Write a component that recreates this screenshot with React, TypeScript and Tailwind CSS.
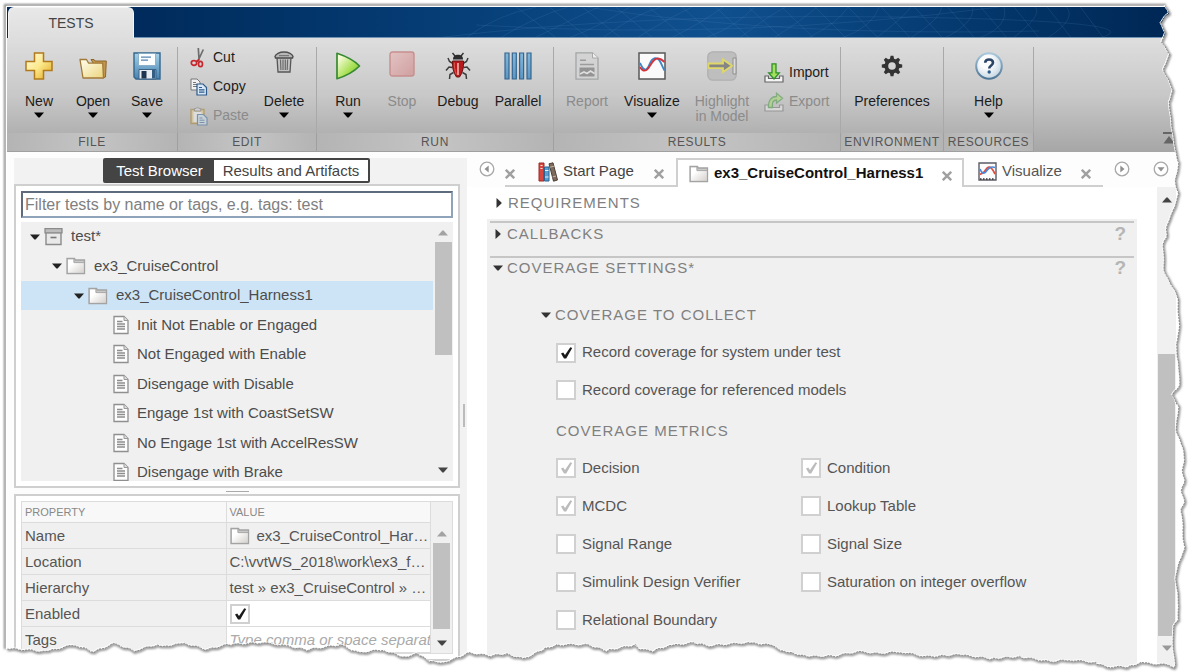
import React, { useState } from "react";
import type { ReactNode } from "react";

/* ---------- small glyphs ---------- */

const Caret = ({ className = "text-black" }: { className?: string }) => (
  <svg width="10" height="6" viewBox="0 0 10 6" className={`shrink-0 ${className}`} aria-hidden="true">
    <path d="M0 .5h10L5.6 5.5H4.4z" fill="currentColor" />
  </svg>
);

const CaretRight = () => (
  <svg width="6" height="10" viewBox="0 0 6 10" className="shrink-0 text-[#333]" aria-hidden="true">
    <path d="M.5 0v10L5.5 5.6V4.4z" fill="currentColor" />
  </svg>
);

const CaretUp = ({ className = "text-[#a3a3a3]" }: { className?: string }) => (
  <svg width="10" height="6" viewBox="0 0 10 6" className={`shrink-0 ${className}`} aria-hidden="true">
    <path d="M0 5.5h10L5.6.5H4.4z" fill="currentColor" />
  </svg>
);

const Cross = () => (
  <svg width="10" height="10" viewBox="0 0 10 10" aria-hidden="true">
    <path d="M.8.8l8.4 8.4M9.2.8L.8 9.2" stroke="#a0a0a0" strokeWidth="2.4" />
  </svg>
);

const FolderIcon = () => (
  <svg width="20" height="18" viewBox="0 0 20 18" className="shrink-0" aria-hidden="true">
    <defs>
      <linearGradient id="fold" x1="0" y1="0" x2="1" y2="1">
        <stop offset="0.3" stopColor="#fff" />
        <stop offset="1" stopColor="#d5d1cd" />
      </linearGradient>
    </defs>
    <path d="M1 16.500V1.500h7.500l1 1.500H18.500v13.500z" fill="#c9c9c9" stroke="#a3a3a3" strokeWidth="1.300" />
    <path d="M2 15.700V2.500h5.500v3.200h10.300v10z" fill="url(#fold)" />
    <path d="M8 1.800v3.800h10" fill="none" stroke="#a3a3a3" strokeWidth=".9" />
  </svg>
);

const BoxIcon = () => (
  <svg width="19" height="19" viewBox="0 0 19 19" className="shrink-0" aria-hidden="true">
    <path d="M2 5.500h15v12H2z" fill="#e9e9e9" stroke="#8b8b8b" strokeWidth="1.400" />
    <path d="M1 1.700h17v4.200H1z" fill="#bdbdbd" stroke="#8b8b8b" strokeWidth="1.300" />
    <path d="M6.500 9.700h6v1.600h-6z" fill="#777" />
  </svg>
);

const DocIcon = () => (
  <svg width="16" height="20" viewBox="0 0 16 20" className="shrink-0" aria-hidden="true">
    <path d="M1 1.500h10L15 5.500v13H1z" fill="#fdfdfd" stroke="#8f8f8f" strokeWidth="1.300" />
    <path d="M11 1.500v4h4" fill="#ddd" stroke="#9a9a9a" />
    <path d="M4 6.500h5.500M4 9h8M4 11.500h8M4 14h8" stroke="#8d8d8d" strokeWidth="1.500" />
  </svg>
);

/* ---------- toolbar icons ---------- */

const PlusIcon = () => (
  <svg width="28" height="28" viewBox="0 0 28 28" aria-hidden="true">
    <defs>
      <linearGradient id="gold" x1="0" y1="0" x2="1" y2="1">
        <stop offset="0" stopColor="#fffbe0" />
        <stop offset="0.5" stopColor="#fbe98c" />
        <stop offset="1" stopColor="#e3a51c" />
      </linearGradient>
    </defs>
    <path d="M9.500 1h9v8.500H27v9h-8.500V27h-9v-8.500H1v-9h8.500z" fill="url(#gold)" stroke="#b07a1d" strokeWidth="1.500" />
  </svg>
);

const OpenIcon = () => (
  <svg width="28" height="28" viewBox="0 0 28 28" aria-hidden="true">
    <defs>
      <linearGradient id="open" x1="0" y1="0" x2="1" y2="1">
        <stop offset="0" stopColor="#fffef0" />
        <stop offset="1" stopColor="#ecd57c" />
      </linearGradient>
    </defs>
    <path d="M12 7.500h3l1 1.500h11.300L26.500 25l-3 1z" fill="#c2964e" stroke="#8d6528" />
    <path d="M1 7.500h6.500l2 3.500 14.200.2L24.500 26H4z" fill="url(#open)" stroke="#a27a38" strokeWidth="1.300" strokeLinejoin="round" />
  </svg>
);

const SaveIcon = () => (
  <svg width="28" height="28" viewBox="0 0 28 28" aria-hidden="true">
    <defs>
      <linearGradient id="disk" x1="0" y1="0" x2="0" y2="1">
        <stop offset="0" stopColor="#a6d3ea" />
        <stop offset="1" stopColor="#4682b0" />
      </linearGradient>
    </defs>
    <path d="M1 1h26v26H3l-2-2z" fill="url(#disk)" stroke="#33668d" strokeWidth="1.400" />
    <path d="M5.500 1.500h17v12h-17z" fill="#fbfdff" stroke="#7fa6c0" strokeWidth=".8" />
    <path d="M8 5.200h10M8 8.200h7" stroke="#5784b4" strokeWidth="1.300" />
    <path d="M6 17.500h17V27H6z" fill="#e7eaee" stroke="#3c6285" />
    <path d="M8.500 19h5v7.500h-5z" fill="#1d3550" />
    <path d="M19 18h3.500v8.500H19z" fill="#325d85" />
  </svg>
);

const CutIcon = () => (
  <svg width="18" height="20" viewBox="0 0 18 20" aria-hidden="true">
    <path d="M8.300 0L9 11M13.300 1.500L7.500 14" stroke="#6d6d6d" strokeWidth="1.700" />
    <ellipse cx="4" cy="15" rx="2.700" ry="2.300" fill="none" stroke="#c8262d" strokeWidth="1.700" />
    <ellipse cx="10.500" cy="16" rx="2" ry="2.700" fill="none" stroke="#c8262d" strokeWidth="1.700" />
    <path d="M6 13.500L9.500 11.500" stroke="#c8262d" strokeWidth="1.500" />
  </svg>
);

const CopyIcon = () => (
  <svg width="18" height="18" viewBox="0 0 18 18" aria-hidden="true">
    <path d="M1 1h6l3 3v8H1z" fill="#f2f2f2" stroke="#777" />
    <path d="M3 4.500h3M3 6.500h5M3 8.500h5" stroke="#777" />
    <path d="M7 6h6l3.500 3.500v7.500H7z" fill="#d6e8f7" stroke="#2e5a89" strokeWidth="1.200" />
    <path d="M9 9.500h3M9 11.800h5.500M9 14.200h5.500" stroke="#2e5a89" strokeWidth="1.200" />
  </svg>
);

const PasteIcon = () => (
  <svg width="18" height="20" viewBox="0 0 18 20" className="opacity-50" aria-hidden="true">
    <path d="M1 3.500h13v14H1z" fill="#e9cf87" stroke="#a9802e" strokeWidth="1.400" />
    <path d="M3.500 6h8v10h-8z" fill="#fff" />
    <path d="M4.500 5V2.500h1.500a1.800 1.800 0 013 0h1.800V5z" fill="#ddd" stroke="#777" />
    <path d="M7.500 8.500h6l3.500 3.500v7H7.500z" fill="#d6e8f7" stroke="#3e6d9c" strokeWidth="1.200" />
    <path d="M9.500 12h3M9.500 14.200h5M9.500 16.500h5" stroke="#3e6d9c" />
  </svg>
);

const TrashIcon = () => (
  <svg width="20" height="22" viewBox="0 0 20 22" aria-hidden="true">
    <path d="M3 6.500h14l-1 14.500H4z" fill="#c4c4c4" stroke="#575757" strokeWidth="1.300" />
    <path d="M6.500 8.500l.4 10.500M9 8.500v10.500M11.300 8.500v10.500M13.600 8.500l-.4 10.500" stroke="#6a6a6a" strokeWidth="1.200" />
    <path d="M1 5.500C1.500 3 5.500 1 10 1s8.500 2 9 4.500l-.5 1.500h-17z" fill="#b7b7b7" stroke="#4f4f4f" strokeWidth="1.400" />
    <path d="M5 4.600h10" stroke="#777" strokeWidth="1.200" />
  </svg>
);

const RunIcon = () => (
  <svg width="26" height="28" viewBox="0 0 26 28" aria-hidden="true">
    <defs>
      <linearGradient id="play" x1="0" y1="0" x2="1" y2="1">
        <stop offset="0.15" stopColor="#f4fbd6" />
        <stop offset="0.6" stopColor="#a9e055" />
        <stop offset="1" stopColor="#66b62c" />
      </linearGradient>
    </defs>
    <path d="M2 1.300c9 3 17 7 22.500 12.700C19 19.500 11 24 2 26.700z" fill="url(#play)" stroke="#378a31" strokeWidth="1.700" strokeLinejoin="round" />
  </svg>
);

const StopIcon = () => (
  <svg width="26" height="26" viewBox="0 0 26 26" aria-hidden="true">
    <defs>
      <linearGradient id="halt" x1="0" y1="0" x2="1" y2="1">
        <stop offset="0" stopColor="#e3c3c3" />
        <stop offset="1" stopColor="#d0a0a0" />
      </linearGradient>
    </defs>
    <rect x="1" y="1" width="24" height="24" rx="2.500" fill="url(#halt)" stroke="#c78f8f" strokeWidth="1.400" />
  </svg>
);

const BugIcon = () => (
  <svg width="26" height="28" viewBox="0 0 26 28" aria-hidden="true">
    <path
      d="M8 11.500L4.500 9.500 3 6M18 11.500l3.500-2L23 6M7.500 15.500L4 15l-3 3.500M18.500 15.500l3.500-.5 3 3.500M8.500 20.500L5 22.500 4.500 27M17.500 20.500l3.500 2 .5 4.500"
      fill="none" stroke="#3c3c3c" strokeWidth="1.500"
    />
    <path d="M10 4L7.500 1M16 4l2.500-3" stroke="#333" strokeWidth="1.400" />
    <path d="M8 7.500C8 4 10 2.700 13 2.700S18 4 18 7.500z" fill="#2c2c2c" />
    <path d="M7.500 9h11c.5 6-1 12-4 16h-3c-3-4-4.500-10-4-16z" fill="#b9191c" stroke="#6a1414" />
    <path d="M13 11v12" stroke="#f0b6b0" strokeWidth="1.600" />
    <path d="M9.300 10.500c0 4 .4 8 2 12" stroke="#dd5a50" fill="none" />
  </svg>
);

const ParallelIcon = () => (
  <svg width="28" height="28" viewBox="0 0 28 28" aria-hidden="true">
    <defs>
      <linearGradient id="bars" x1="0" y1="0" x2="0" y2="1">
        <stop offset="0" stopColor="#83b8dc" />
        <stop offset="1" stopColor="#5b96c4" />
      </linearGradient>
    </defs>
    <path d="M1 1h4v26H1zM8.300 1h4v26h-4zM15.600 1h4v26h-4zM23 1h4v26h-4z" fill="url(#bars)" stroke="#34658f" strokeWidth="1.200" />
  </svg>
);

const ReportIcon = () => (
  <svg width="24" height="28" viewBox="0 0 24 28" aria-hidden="true">
    <path d="M1 .8h16.500L23 6v21.200H1z" fill="#d3d3d3" stroke="#a3a5a6" strokeWidth="1.300" />
    <path d="M17.500.8V6H23" fill="#eee" stroke="#a9a9a9" />
    <path d="M5 8.300h6M5 12.500h14" stroke="#9c9c9c" strokeWidth="1.500" />
    <path d="M4.500 15.500h15v9h-15z" fill="#949494" />
    <path d="M5 22l4-2 3 1.500 3.500-2.500 4 2.500" stroke="#dedede" strokeWidth="1.600" fill="none" />
  </svg>
);

const PlotIcon = () => (
  <svg width="28" height="28" viewBox="0 0 28 28" aria-hidden="true">
    <path d="M1 1h26v26H1z" fill="#fafafa" stroke="#585858" strokeWidth="1.500" />
    <path d="M2 11c2 4 3 7 6 6.500C12 16 11 7 17 6.200c5-.5 6 6 9.500 12.300" fill="none" stroke="#3b86c7" strokeWidth="1.800" />
    <path d="M2 15c2 3.500 4 4.500 6.500 3C13 15 14 6 20 6.500c3 .2 5 2 6.500 3.500" fill="none" stroke="#d4333b" strokeWidth="1.800" />
  </svg>
);

const MiniPlotIcon = () => (
  <svg width="19" height="19" viewBox="0 0 19 19" className="shrink-0" aria-hidden="true">
    <path d="M1 1h17v17H1z" fill="#fcfcfc" stroke="#5b5b66" strokeWidth="1.400" />
    <path d="M2 12.500l4-2.500 3-3.800c3-2.600 5 0 8 5.800" fill="none" stroke="#e04a3a" strokeWidth="1.700" />
    <path d="M2 7c1.500 3.500 3 5 5 3.500C10 8 11 3.500 17 5.500" fill="none" stroke="#4b86d8" strokeWidth="1.700" />
    <path d="M2 17h15" stroke="#333" strokeWidth="1.600" strokeDasharray="1.500 1.500" />
  </svg>
);

const HighlightIcon = () => (
  <svg width="30" height="30" viewBox="0 0 30 30" aria-hidden="true">
    <rect x=".8" y=".8" width="28.400" height="28.400" rx="5" fill="#bebebe" stroke="#b0b0b0" strokeWidth="1.300" />
    <path d="M26 7h3v16h-3z" fill="#dadada" stroke="#8f8f8f" />
    <path d="M1.500 12.500h14.500V8.500l9 6.300-9 6.300v-4H1.500z" fill="#858585" stroke="#dfd868" strokeWidth="1.800" />
  </svg>
);

const TrayIcon = ({ kind }: { kind: "in" | "out" }) => (
  <svg width="20" height="20" viewBox="0 0 20 20" className={kind === "out" ? "opacity-45" : ""} aria-hidden="true">
    <path d="M1 13v6h18v-6h-3.500v2.500h-11V13z" fill="#f4f4f4" stroke="#666" strokeWidth="1.200" />
    {kind === "in" ? (
      <path d="M8 .8h4v9h3.300L10 16 4.700 9.800H8z" fill="#a3e05c" stroke="#2f8f2b" strokeWidth="1.300" />
    ) : (
      <path d="M4.500 15.500C4 9 7 4.500 12.500 4.500V1.200l6 5-6 5V8C9 8 8 10.500 8.500 15.500z" fill="#a3e05c" stroke="#2f8f2b" strokeWidth="1.300" />
    )}
  </svg>
);

const GearIcon = () => (
  <svg width="22" height="22" viewBox="0 0 22 22" aria-hidden="true">
    <g fill="#333">
      {[0, 45, 90, 135, 180, 225, 270, 315].map((a) => (
        <path key={a} d="M8.800 4.500L9.600.8h2.800l.8 3.700z" transform={`rotate(${a} 11 11)`} />
      ))}
    </g>
    <circle cx="11" cy="11" r="5.700" fill="none" stroke="#333" strokeWidth="3.800" />
  </svg>
);

const HelpIcon = () => (
  <svg width="28" height="28" viewBox="0 0 28 28" aria-hidden="true">
    <defs>
      <linearGradient id="orb" x1="0" y1="0" x2="0" y2="1">
        <stop offset="0" stopColor="#a9c8dc" />
        <stop offset="1" stopColor="#4e7596" />
      </linearGradient>
      <radialGradient id="ball" cx=".4" cy=".35" r=".8">
        <stop offset="0.300" stopColor="#fbfcfd" />
        <stop offset="1" stopColor="#b4cad9" />
      </radialGradient>
    </defs>
    <circle cx="14" cy="14" r="12.800" fill="url(#ball)" stroke="url(#orb)" strokeWidth="2" />
    <path d="M10.200 10.800C10.200 8.500 11.800 7.500 14 7.500s4 1.200 4 3.300c0 2.600-3.800 2.700-3.800 5.700" fill="none" stroke="#2c4466" strokeWidth="2.600" />
    <circle cx="14.200" cy="20" r="1.700" fill="#2d5c8a" />
  </svg>
);

const BooksIcon = () => (
  <svg width="20" height="20" viewBox="0 0 20 20" className="shrink-0" aria-hidden="true">
    <path d="M1 1h5v18H1z" fill="#d8473f" stroke="#9b2b27" />
    <path d="M2.500 3.500h2M2.500 6.500h2" stroke="#fbe6e2" />
    <path d="M6.500 5h4.500v14H6.500z" fill="#5a9ed0" stroke="#29618f" />
    <path d="M7 8.500h3.500M7 15h3.500" stroke="#e4f1fa" />
    <path d="M11 1.800l4-1L19.500 18l-4 1.200z" fill="#7c6a5c" stroke="#4d4037" />
    <path d="M12 5.200l4-1M14.500 15l3.500-1" stroke="#c3b19f" />
  </svg>
);

/* ---------- toolbar ---------- */

const ToolGroup = ({ name, className, children }: { name: string; className: string; children: ReactNode }) => (
  <section aria-label={name} className={`flex shrink-0 flex-col ${className}`}>
    <div className="mt-[9px] flex h-[86px] items-start border-r border-[#a9a9a9]">{children}</div>
    <div className="flex h-[19px] items-center justify-center border-r border-b border-[#a0a0a0] bg-linear-to-r from-[#b4b4b4] via-[#c4c4c4] to-[#b4b4b4] text-[12px] tracking-wider text-[#555]">
      {name}
    </div>
  </section>
);

const BigButton = ({
  icon, label, width, menu = false, disabled = false,
}: { icon: ReactNode; label: string; width: string; menu?: boolean; disabled?: boolean }) => (
  <button
    type="button"
    disabled={disabled}
    className={`flex shrink-0 flex-col items-center whitespace-pre text-[14px] leading-[15px] ${width} ${disabled ? "text-[#8b8b8b]" : "text-[#1c1c1c]"}`}
  >
    <span className="mt-1 mb-[13px] flex h-[30px] items-center justify-center">{icon}</span>
    <span>{label}</span>
    {menu && <Caret className="mt-[3px] text-black" />}
  </button>
);

const SmallButton = ({ icon, label, disabled = false }: { icon: ReactNode; label: string; disabled?: boolean }) => (
  <button
    type="button"
    disabled={disabled}
    className={`flex h-[29px] items-center gap-[5px] text-[14px] ${disabled ? "text-[#8b8b8b]" : "text-[#1c1c1c]"}`}
  >
    {icon}
    <span>{label}</span>
  </button>
);

const Toolbar = () => (
  <div className="flex h-[114px] shrink-0 bg-linear-to-b from-[#dedede] via-[#c8c8c8] to-[#a6a6a6]">
    <ToolGroup name="FILE" className="w-[171px]">
      <div className="flex pl-[5px]">
        <BigButton icon={<PlusIcon />} label="New" width="w-[54px]" menu />
        <BigButton icon={<OpenIcon />} label="Open" width="w-[54px]" menu />
        <BigButton icon={<SaveIcon />} label="Save" width="w-[54px]" menu />
      </div>
    </ToolGroup>
    <ToolGroup name="EDIT" className="w-[139px]">
      <div className="-mt-1 flex w-[74px] flex-col pl-3">
        <SmallButton icon={<CutIcon />} label="Cut" />
        <SmallButton icon={<CopyIcon />} label="Copy" />
        <SmallButton icon={<PasteIcon />} label="Paste" disabled />
      </div>
      <BigButton icon={<span className="-mt-2"><TrashIcon /></span>} label="Delete" width="w-[64px]" menu />
    </ToolGroup>
    <ToolGroup name="RUN" className="w-[237px]">
      <div className="flex pl-1">
        <BigButton icon={<RunIcon />} label="Run" width="w-[54px]" menu />
        <BigButton icon={<span className="-mt-1"><StopIcon /></span>} label="Stop" width="w-[54px]" disabled />
        <BigButton icon={<BugIcon />} label="Debug" width="w-[58px]" />
        <BigButton icon={<ParallelIcon />} label="Parallel" width="w-[62px]" />
      </div>
    </ToolGroup>
    <ToolGroup name="RESULTS" className="w-[287px]">
      <BigButton icon={<ReportIcon />} label="Report" width="w-[66px]" disabled />
      <BigButton icon={<PlotIcon />} label="Visualize" width="w-[64px]" menu />
      <BigButton icon={<HighlightIcon />} label={"Highlight\nin Model"} width="w-[76px]" disabled />
      <div className="mt-[11px] flex flex-col pl-1">
        <SmallButton icon={<TrayIcon kind="in" />} label="Import" />
        <SmallButton icon={<TrayIcon kind="out" />} label="Export" disabled />
      </div>
    </ToolGroup>
    <ToolGroup name="ENVIRONMENT" className="w-[103px]">
      <BigButton icon={<GearIcon />} label="Preferences" width="w-[102px]" />
    </ToolGroup>
    <ToolGroup name="RESOURCES" className="w-[90px]">
      <BigButton icon={<HelpIcon />} label="Help" width="w-[89px]" menu />
    </ToolGroup>
    <button type="button" aria-label="Collapse toolbar" className="mr-[13px] mb-[6px] ml-auto self-end">
      <svg width="16" height="14" viewBox="0 0 16 14" aria-hidden="true">
        <path d="M2 0h12v2H2zM8 4l5.500 7.500h-11z" fill="#666" />
      </svg>
    </button>
  </div>
);

const TitleBar = () => (
  <header className="flex h-[31px] shrink-0 bg-linear-to-r from-[#002b5c] from-12% via-[#10508f] via-60% to-[#002856] to-97%">
    <div role="tablist" className="flex">
      <button
        type="button" role="tab" aria-selected="true"
        className="ml-[1px] w-[126px] rounded-t-md border border-b-0 border-[#f4f4f4] bg-linear-to-b from-[#e8e8e8] to-[#dedede] text-[14px] text-[#444]"
      >
        TESTS
      </button>
    </div>
    <svg className="h-full min-w-0 flex-1" viewBox="0 0 1050 31" preserveAspectRatio="none" aria-hidden="true">
      <g fill="none" stroke="#5d93c6" strokeOpacity=".2" strokeWidth=".8">
        {Array.from({ length: 18 }, (_, i) => (
          <path key={i} d={`M${330 + i * 34} 31Q${360 + i * 34} ${8 + (i % 4) * 4} ${400 + i * 31} 0M${420 + i * 32} 31L${380 + i * 33} 0`} />
        ))}
        <path d="M300 31Q500 6 760 10T960 31M340 18Q600 34 860 0M450 0Q640 30 900 24" />
      </g>
      <path d="M0 30.500H1050" stroke="#6f93b5" />
    </svg>
  </header>
);

/* ---------- left pane ---------- */

type Node = { label: string; kind: "file" | "folder" | "case"; pad: string; selected?: boolean };

const nodes: Node[] = [
  { label: "test*", kind: "file", pad: "pl-[9px]" },
  { label: "ex3_CruiseControl", kind: "folder", pad: "pl-[31px]" },
  { label: "ex3_CruiseControl_Harness1", kind: "folder", pad: "pl-[53px]", selected: true },
  { label: "Init Not Enable or Engaged", kind: "case", pad: "pl-[92px]" },
  { label: "Not Engaged with Enable", kind: "case", pad: "pl-[92px]" },
  { label: "Disengage with Disable", kind: "case", pad: "pl-[92px]" },
  { label: "Engage 1st with CoastSetSW", kind: "case", pad: "pl-[92px]" },
  { label: "No Engage 1st with AccelResSW", kind: "case", pad: "pl-[92px]" },
  { label: "Disengage with Brake", kind: "case", pad: "pl-[92px]" },
];

const Tree = () => (
  <div className="mt-[4px] flex h-[259px] overflow-hidden bg-[#f0f0f0]">
    <ul role="tree" aria-label="Tests" className="flex h-[265px] min-w-0 flex-1 flex-col">
      {nodes.map((n) => (
        <li
          key={n.label} role="treeitem" aria-selected={!!n.selected}
          className={`flex flex-1 items-center text-[15px] text-[#4c4c4c] ${n.pad} ${n.selected ? "bg-[#cce4f6]" : ""}`}
        >
          {n.kind !== "case" && <Caret className="mr-[4px] text-[#222]" />}
          {n.kind === "file" ? <BoxIcon /> : n.kind === "folder" ? <FolderIcon /> : <DocIcon />}
          <span className="ml-2 whitespace-nowrap">{n.label}</span>
        </li>
      ))}
    </ul>
    <div className="flex w-[20px] flex-col items-center pt-[8px] pb-[8px]" aria-hidden="true">
      <CaretUp />
      <div className="mt-[6px] h-[113px] w-[17px] bg-[#c0c0c0]" />
      <Caret className="mt-auto text-[#444]" />
    </div>
  </div>
);

const Check = ({
  label, on = false, dim = false, hidden = false,
}: { label: string; on?: boolean; dim?: boolean; hidden?: boolean }) => {
  const [checked, setChecked] = useState(on);
  return (
    <label className="flex items-center gap-[6px] text-[15px] text-[#555]">
      <span className="grid">
        <input
          type="checkbox" checked={checked} disabled={dim} onChange={() => setChecked(!checked)}
          aria-label={hidden ? label : undefined}
          className="size-[20px] appearance-none border-2 border-[#d0d0d0] bg-white [grid-area:1/1]"
        />
        {checked && (
          <svg width="20" height="20" viewBox="0 0 20 20" className={`pointer-events-none [grid-area:1/1] ${dim ? "text-[#bcbcbc]" : "text-[#1a1a1a]"}`} aria-hidden="true">
            <path d="M5 10.500l2.200-1 1.800 2.500L14.300 4.300l1.900.6L10.200 15.500H8z" fill="currentColor" />
          </svg>
        )}
      </span>
      {!hidden && <span>{label}</span>}
    </label>
  );
};

const Row = ({ name, white = false, children }: { name: string; white?: boolean; children: ReactNode }) => (
  <tr className="h-[26px] border-b border-[#dcdcdc]">
    <th scope="row" className="border-r border-[#dcdcdc] bg-[#f0f0f0] pl-[3px] text-left font-normal">{name}</th>
    <td className={`pl-[3px] whitespace-nowrap ${white ? "bg-white" : "bg-[#f0f0f0]"}`}>{children}</td>
  </tr>
);

const Properties = () => (
  <div className="flex min-h-[152px] border border-[#dcdcdc] bg-[#f0f0f0]">
    <div className="min-w-0 flex-1 border-r border-[#dcdcdc]">
      <table className="w-full table-fixed border-collapse text-[15px] leading-[20px] text-[#555]">
        <thead>
          <tr className="h-[20px] border-b border-[#dcdcdc] bg-[#f8f8f8] text-[11px] text-[#888]">
            <th scope="col" className="w-1/2 border-r border-[#dcdcdc] pl-[3px] text-left font-normal">PROPERTY</th>
            <th scope="col" className="w-1/2 pl-[3px] text-left font-normal">VALUE</th>
          </tr>
        </thead>
        <tbody>
          <Row name="Name">
            <span className="flex items-center gap-[7px]"><FolderIcon /><span>ex3_CruiseControl_Har…</span></span>
          </Row>
          <Row name="Location">C:\vvtWS_2018\work\ex3_f…</Row>
          <Row name="Hierarchy">test » ex3_CruiseControl » …</Row>
          <Row name="Enabled" white><Check label="Enabled" on hidden /></Row>
          <Row name="Tags" white>
            <input aria-label="Tags" placeholder="Type comma or space separated tags" className="block w-full bg-transparent italic placeholder:text-[#aaa]" />
          </Row>
        </tbody>
      </table>
    </div>
    <div className="flex w-[21px] shrink-0 flex-col items-center pt-[29px] pb-[7px]" aria-hidden="true">
      <CaretUp />
      <div className="mt-[6px] h-[86px] w-[17px] bg-[#c0c0c0]" />
      <Caret className="mt-auto text-[#444]" />
    </div>
  </div>
);

const LeftPane = () => (
  <aside className="ml-[7px] flex w-[453px] shrink-0 flex-col bg-[#f2f2f2] pr-[7px]">
    <div role="tablist" className="ml-[89px] flex h-[25px] w-[267px] shrink-0 rounded-[2px] border-2 border-[#444] bg-white text-[15px]">
      <button type="button" role="tab" aria-selected="true" className="w-[109px] bg-[#444] text-white">Test Browser</button>
      <button type="button" role="tab" aria-selected="false" className="flex-1 text-[#444]">Results and Artifacts</button>
    </div>
    <div className="mt-px shrink-0 border-2 border-[#cfcfcf] bg-white p-[5px]">
      <input
        aria-label="Filter tests" placeholder="Filter tests by name or tags, e.g. tags: test"
        className="block h-[27px] w-full border-2 border-[#8fa3bb] border-t-[#5d6b7c] border-l-[#5d6b7c] bg-white px-[2px] text-[16px] placeholder:text-[#808080]"
      />
      <Tree />
    </div>
    <div className="flex h-[6px] shrink-0 items-center justify-center bg-[#fcfcfc]">
      <div className="h-px w-[23px] bg-[#aaa]" />
    </div>
    <div className="shrink-0 border-2 border-[#cfcfcf] bg-white p-[5px]">
      <Properties />
    </div>
  </aside>
);

/* ---------- right pane ---------- */

const RoundArrow = ({ dir, label, className }: { dir: "left" | "right" | "down"; label: string; className: string }) => (
  <button type="button" aria-label={label} className={`mt-[3px] size-[16px] shrink-0 ${className}`}>
    <svg width="16" height="16" viewBox="0 0 16 16" aria-hidden="true">
      <circle cx="8" cy="8" r="6.800" fill="#fff" stroke="#a8a8a8" strokeWidth="1.300" />
      <path
        d={dir === "left" ? "M9.700 4.500v7L5.500 8z" : dir === "right" ? "M6.300 4.500v7L10.500 8z" : "M4.500 6.300h7L8 10.500z"}
        fill="#909090"
      />
    </svg>
  </button>
);

const CloseButton = ({ label, className = "ml-auto" }: { label: string; className?: string }) => (
  <button type="button" aria-label={label} className={`mt-1 ${className}`}><Cross /></button>
);

const Tabs = () => (
  <div className="flex h-[29px] shrink-0">
    <RoundArrow dir="left" label="Scroll tabs left" className="mr-[10px] ml-[12px]" />
    <div className="flex w-[16px] items-center border-b-2 border-[#cfcfcf]">
      <CloseButton label="Close tab" className="mr-auto" />
    </div>
    <div className="flex w-[155px] items-center border-b-2 border-[#cfcfcf] pr-3 pl-[17px] text-[15px] text-[#444]">
      <BooksIcon />
      <button type="button" className="ml-[5px] whitespace-nowrap">Start Page</button>
      <CloseButton label="Close Start Page" />
    </div>
    <div className="flex w-[288px] items-center border-2 border-b-0 border-[#cfcfcf] bg-white pr-[10px] pl-[11px] text-[15px] font-bold text-[#111]">
      <FolderIcon />
      <button type="button" className="ml-[5px] whitespace-nowrap">ex3_CruiseControl_Harness1</button>
      <CloseButton label="Close ex3_CruiseControl_Harness1" />
    </div>
    <div className="flex w-[139px] items-center border-b-2 border-[#cfcfcf] pr-3 pl-[14px] text-[15px] text-[#555]">
      <MiniPlotIcon />
      <button type="button" className="ml-[5px]">Visualize</button>
      <CloseButton label="Close Visualize" />
    </div>
    <RoundArrow dir="right" label="Scroll tabs right" className="ml-[11px]" />
    <RoundArrow dir="down" label="List tabs" className="ml-[23px]" />
  </div>
);

const Heading = ({ label, open = false }: { label: string; open?: boolean }) => (
  <button type="button" aria-expanded={open} className="flex items-center gap-[4px] text-[15px] leading-[20px] tracking-[1px] whitespace-nowrap text-[#808080]">
    <span className="flex w-[10px] justify-center">{open ? <Caret className="text-[#333]" /> : <CaretRight />}</span>
    {label}
  </button>
);

const Help = ({ label }: { label: string }) => (
  <button type="button" aria-label={label} className="text-[19px] leading-[20px] font-bold text-[#b5b5b5]">?</button>
);

const metrics: { label: string; on?: boolean }[] = [
  { label: "Decision", on: true },
  { label: "Condition", on: true },
  { label: "MCDC", on: true },
  { label: "Lookup Table" },
  { label: "Signal Range" },
  { label: "Signal Size" },
  { label: "Simulink Design Verifier" },
  { label: "Saturation on integer overflow" },
  { label: "Relational Boundary" },
];

const RightPane = () => (
  <main className="flex min-w-0 flex-1 flex-col">
    <Tabs />
    <div className="flex min-h-0 flex-1 bg-white pl-[20px]">
      <div className="flex min-w-0 flex-1 flex-col">
        <div className="flex h-[32px] shrink-0 items-center pl-[7px]"><Heading label="REQUIREMENTS" /></div>
        <div className="flex-1 bg-[#f0f0f0] px-[3px] pt-[2px]">
          <section className="flex h-[35px] items-start justify-between border-t-2 border-[#c6c6c6] pt-px pr-2 pl-[3px]">
            <Heading label="CALLBACKS" />
            <Help label="Help on callbacks" />
          </section>
          <section className="border-t-2 border-[#c6c6c6] pl-[3px]">
            <div className="flex items-start justify-between pr-2">
              <Heading label="COVERAGE SETTINGS*" open />
              <Help label="Help on coverage settings" />
            </div>
            <div className="mt-[27px] pl-[48px]"><Heading label="COVERAGE TO COLLECT" open /></div>
            <div className="mt-[9px] flex flex-col pl-[63px]">
              <div className="flex h-[37px] items-center"><Check label="Record coverage for system under test" on /></div>
              <div className="flex h-[38px] items-center"><Check label="Record coverage for referenced models" /></div>
              <h3 className="mt-[12px] text-[15px] leading-[20px] tracking-[1px] text-[#808080]">COVERAGE METRICS</h3>
              <div className="mt-[8px] grid h-[190px] grid-cols-[245px_1fr] grid-rows-5">
                {metrics.map((m) => (
                  <div key={m.label} className="flex items-center"><Check label={m.label} on={m.on} dim={m.on} /></div>
                ))}
              </div>
            </div>
          </section>
        </div>
      </div>
      <div className="mr-[14px] ml-[20px] flex w-[19px] shrink-0 flex-col items-center bg-[#f0f0f0] pt-[10px] pb-[21px]" aria-hidden="true">
        <CaretUp className="text-[#444]" />
        <div className="mt-[151px] w-[17px] flex-1 bg-[#c0c0c0]" />
        <Caret className="mt-[9px] text-[#999]" />
      </div>
    </div>
  </main>
);

/* ---------- torn paper frame ---------- */

const anchors: [number, number][] = [
  [1165, 6], [1169, 13], [1161, 24], [1165, 33], [1162, 42], [1169, 55], [1164, 70], [1172, 90], [1170, 103], [1171, 127],
  [1176, 147], [1178, 163], [1176, 180], [1178, 193], [1173, 213], [1166, 230], [1167, 237], [1163, 247], [1164, 270],
  [1173, 287], [1178, 300], [1180, 325], [1176, 343], [1179, 363], [1179, 385], [1173, 395], [1178, 407], [1177, 430],
  [1182, 447], [1185, 463], [1182, 473], [1185, 483], [1181, 493], [1185, 502], [1181, 512], [1183, 530], [1185, 547],
  [1180, 560], [1176, 580], [1178, 605], [1179, 620], [1173, 627], [1175, 667], [1167, 665], [1142, 663], [1127, 667],
  [1107, 667], [1095, 663], [1070, 660], [1050, 662], [1020, 657], [990, 659], [960, 655], [925, 657], [900, 652], [880, 654], [858, 652],
  [837, 656], [807, 657], [793, 653], [780, 650], [770, 645], [747, 643], [710, 646], [693, 643], [670, 646], [653, 651],
  [640, 650], [635, 645], [607, 651], [588, 645], [557, 645], [543, 650], [523, 659], [507, 654], [490, 656], [470, 653],
  [443, 663], [430, 661], [417, 654], [405, 657], [380, 650], [360, 653], [340, 645], [308, 650], [285, 646], [263, 643],
  [243, 644], [227, 645], [207, 650], [182, 643], [170, 647], [157, 645], [135, 651], [113, 644], [95, 652], [73, 645],
  [47, 652], [25, 650], [7, 649],
];

const jag = (i: number) => Math.sin(i * 12.9898) * 0.8;

const tornPoints = anchors.flatMap(([x, y], i) => {
  const next = anchors[i + 1];
  if (!next) return [`${x} ${y}`];
  const n = Math.max(1, Math.round(Math.hypot(next[0] - x, next[1] - y) / 3));
  return Array.from({ length: n }, (_, k) => {
    const t = k / n;
    const px = x + (next[0] - x) * t + jag(i * 7 + k);
    const py = y + (next[1] - y) * t + jag(i * 5 + k * 3);
    return `${px.toFixed(1)} ${py.toFixed(1)}`;
  });
});

const torn = tornPoints.join("L");
const edge = `M6 6L${torn}L6 649Z`;

const TornFrame = () => (
  <svg className="pointer-events-none absolute inset-0 h-full w-full" viewBox="0 0 1190 672" preserveAspectRatio="none" aria-hidden="true">
    <defs>
      <filter id="soft" x="-2%" y="-2%" width="104%" height="104%"><feGaussianBlur stdDeviation="0.9" /></filter>
      <clipPath id="outside"><path d={`M0 0H1190V672H0Z${edge}`} clipRule="evenodd" /></clipPath>
    </defs>
    <path d={`M0 0H1190V672H0Z${edge}`} fill="#fff" fillRule="evenodd" />
    <g clipPath="url(#outside)">
      <path d={`M${torn}`} fill="none" stroke="#8a8a8a" strokeWidth="2.500" filter="url(#soft)" transform="translate(.5 .8)" />
      <path d="M5 649V5H1166" fill="none" stroke="#808080" strokeWidth="2" filter="url(#soft)" />
    </g>
    <path d={`M${torn}`} fill="none" stroke="#fff" strokeWidth="1" transform="translate(-.8 -.8)" />
    <path d={`M${torn}`} fill="none" stroke="#555" strokeWidth=".8" strokeDasharray="2 1" strokeOpacity=".75" />
    <path d="M6.500 649V6.500H1165" fill="none" stroke="#fff" />
  </svg>
);

export default function App() {
  return (
    <div className="relative flex h-screen flex-col overflow-hidden bg-[#fdfdfd] pt-[7px] pl-[7px] font-['Liberation_Sans',Arial,sans-serif]">
      <TitleBar />
      <Toolbar />
      <div className="flex min-h-0 flex-1 pt-[6px]">
        <LeftPane />
        <div className="-ml-1 flex w-[4px] shrink-0 flex-col pt-[246px]" aria-hidden="true">
          <div className="h-[23px] w-[2px] bg-[#bbb]" />
        </div>
        <RightPane />
      </div>
      <TornFrame />
    </div>
  );
}
